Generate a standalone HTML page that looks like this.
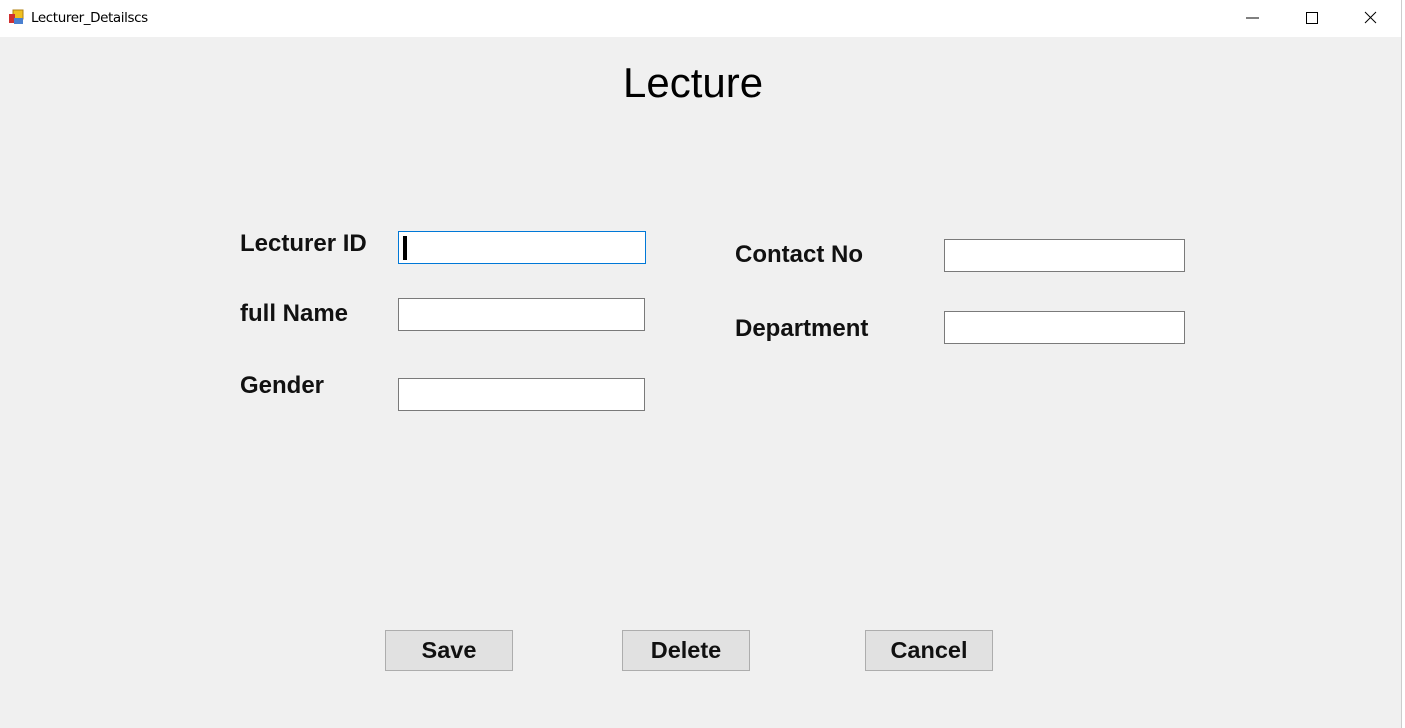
<!DOCTYPE html>
<html><head><style>
body{margin:0;width:1405px;height:728px;background:#fff;position:relative;overflow:hidden;font-family:"Liberation Sans",Arial,sans-serif}
.bar{position:absolute;left:0;top:0;width:1401px;height:37px;background:#fff}
.main{position:absolute;left:0;top:37px;width:1401px;height:691px;background:#f0f0f0}
.edge{position:absolute;left:1401px;top:0;width:4px;height:728px;background:#fff;border-left:1px solid #ccc}
.t{position:absolute;white-space:nowrap}
.lbl{position:absolute;font-weight:bold;font-size:24px;color:#111;white-space:nowrap}
.in{position:absolute;background:#fff;border:1px solid #7a7a7a;box-sizing:border-box;width:246px;height:33px}
.btn{position:absolute;background:#e1e1e1;border:1px solid #adadad;box-sizing:border-box;width:128px;height:41px;font-weight:bold;font-size:23.5px;text-align:center;line-height:39px;color:#111}
</style></head><body>
<div class="bar"></div>
<div class="main"></div>
<div class="edge"></div>
<svg class="t" style="left:8px;top:9px" width="16" height="16"><rect x="5" y="1" width="10" height="9" fill="#f0c020" stroke="#b08010"/><rect x="1" y="5" width="6" height="9" fill="#d03030"/><rect x="6" y="9" width="9" height="6" fill="#4a80d0"/></svg>
<div class="t" style="left:31px;top:10px;font-size:13.5px;font-family:'DejaVu Sans',sans-serif;color:#000;letter-spacing:-0.4px">Lecturer_Detailscs</div>
<svg class="t" style="left:1240px;top:5px" width="160" height="26"><line x1="6" y1="13" x2="19" y2="13" stroke="#000"/><rect x="66.5" y="7.5" width="11" height="11" fill="none" stroke="#000"/><path d="M125 7L136 18M136 7L125 18" stroke="#000"/></svg>
<div class="t" style="left:623px;top:59px;font-size:42px;color:#000">Lecture</div>
<div class="lbl" style="left:240px;top:230px">Lecturer ID</div>
<div class="lbl" style="left:240px;top:300px">full Name</div>
<div class="lbl" style="left:240px;top:372px">Gender</div>
<div class="lbl" style="left:735px;top:241px">Contact No</div>
<div class="lbl" style="left:735px;top:315px">Department</div>
<div class="in" style="left:398px;top:231px;border:1px solid #0078d7;width:248px"><div style="position:absolute;left:4px;top:4px;width:4px;height:24px;background:#000"></div></div>
<div class="in" style="left:398px;top:298px;width:247px"></div>
<div class="in" style="left:398px;top:378px;width:247px"></div>
<div class="in" style="left:944px;top:239px;width:241px"></div>
<div class="in" style="left:944px;top:311px;width:241px"></div>
<div class="btn" style="left:385px;top:630px">Save</div>
<div class="btn" style="left:622px;top:630px">Delete</div>
<div class="btn" style="left:865px;top:630px">Cancel</div>
</body></html>
